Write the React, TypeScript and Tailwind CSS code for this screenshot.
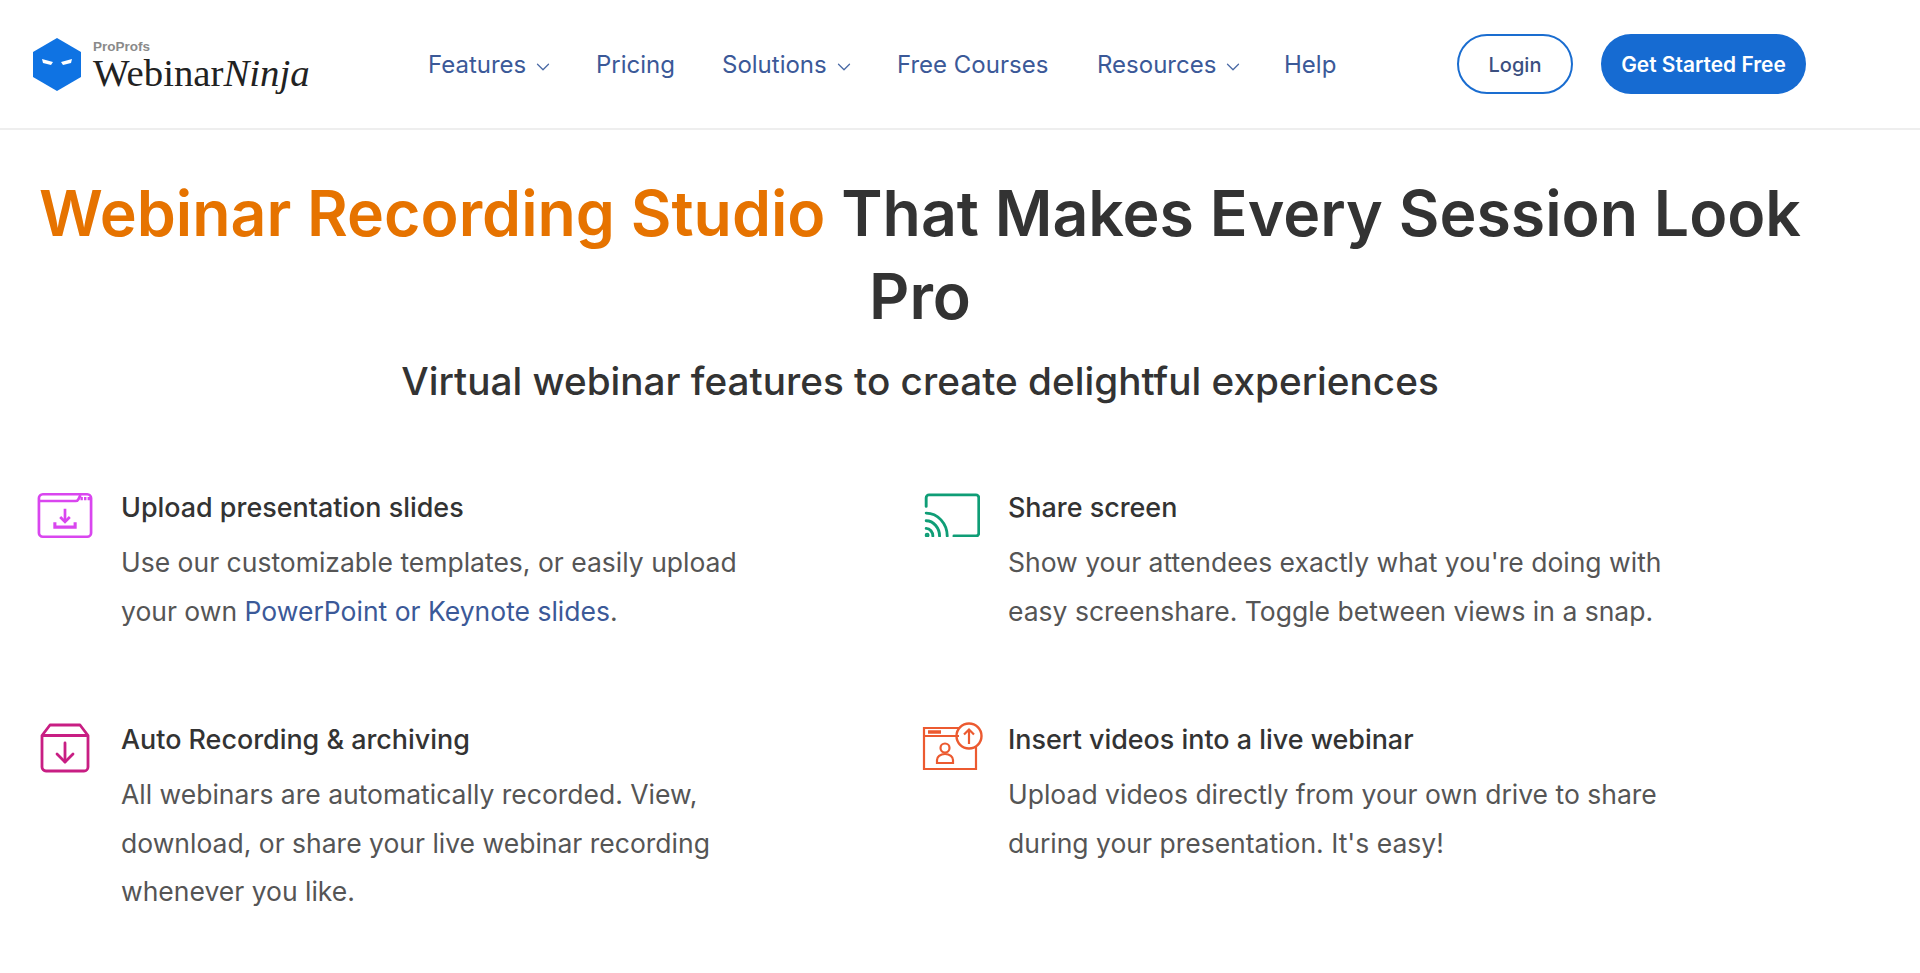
import { ChevronDown } from "lucide-react";

function UploadIcon() {
  return (
    <svg width="56" height="47" viewBox="0 0 58 48" fill="none" stroke="#d946ef" strokeWidth="2.8">
      <rect x="2" y="2" width="54" height="44" rx="4" />
      <path d="M2 9h38q2 0 3-2l2-4" />
      <path d="M45 6.500h10" strokeDasharray="2.500 1.200" strokeWidth="3.500" />
      <path d="M29 17v13" />
      <path d="M24 25.500l5 5 5-5" />
      <path d="M18.500 31v5h21v-5" strokeWidth="3.200" />
    </svg>
  );
}

function ArchiveIcon() {
  return (
    <svg width="52" height="52" viewBox="0 0 52 52" fill="none" stroke="#c81e83" strokeWidth="2.800" strokeLinejoin="round">
      <path d="M3 13.500 11 3h30l8 10.500V45a4 4 0 0 1-4 4H7a4 4 0 0 1-4-4z" />
      <path d="M3 13.500h46" />
      <path d="M26 21v19" strokeLinecap="round" />
      <path d="M18 32l8 8 8-8" strokeLinecap="round" />
    </svg>
  );
}

function CastIcon() {
  return (
    <svg width="56" height="44" viewBox="0 0 58 46" fill="none" stroke="#0f9d76" strokeWidth="3" strokeLinecap="round">
      <path d="M2 14V5a3 3 0 0 1 3-3h49a3 3 0 0 1 3 3v37a3 3 0 0 1-3 3H31" />
      <path d="M2 21c12 0 22 11 22 24" />
      <path d="M2 29c8 0 14 8 14 16" />
      <path d="M2 37c4 0 7 4 7 8" />
      <circle cx="3" cy="44" r="1" fill="#0f9d76" />
    </svg>
  );
}

function VideoIcon() {
  return (
    <svg width="62" height="52" viewBox="0 0 62 52" fill="none" stroke="#ec5a30" strokeWidth="2.200">
      <path d="M37 7H2v41h52V26" />
      <path d="M2 15h35" />
      <path d="M6 11h13" strokeWidth="3.500" />
      <circle cx="47" cy="15" r="12.500" strokeWidth="2.400" />
      <path d="M47 23V8.500M42 13.500 47 8.500l5 5" />
      <circle cx="23" cy="27" r="4.500" />
      <path d="M15 42v-3c0-3 3-6 8-6s8 3 8 6v3z" />
    </svg>
  );
}

function LogoMark() {
  return (
    <svg width="50" height="53" viewBox="0 0 50 53">
      <path d="M25 0 49 14v25L25 53 1 39V14z" fill="#0f73e3" />
      <path d="M10 21l11 3-2 3-8-2zM40 21l-11 3 2 3 8-2z" fill="#fff" />
    </svg>
  );
}

const navItems = [
  { label: "Features", caret: true, w: "w-[168px]" },
  { label: "Pricing", caret: false, w: "w-[126px]" },
  { label: "Solutions", caret: true, w: "w-[175px]" },
  { label: "Free Courses", caret: false, w: "w-[200px]" },
  { label: "Resources", caret: true, w: "w-[187px]" },
  { label: "Help", caret: false, w: "w-[173px]" },
];

function Feature({ icon, title, children, iconClass = "pt-[3px]" }: any) {
  return (
    <div className="flex">
      <div className={`w-[84px] shrink-0 ${iconClass}`}>{icon}</div>
      <div className="w-[720px]">
        <h3 className="text-[26.900px] font-medium leading-[36px] text-[#333]">{title}</h3>
        <p className="mt-[13px] text-[26.500px] leading-[48.500px] text-[#555]">{children}</p>
      </div>
    </div>
  );
}

export default function App() {
  return (
    <div className="min-h-[973px] bg-white font-['Inter','Liberation_Sans',sans-serif]">
      <header className="flex h-[130px] items-start border-b-2 border-[#eeeeee]">
        <div className="ml-[32px] mt-[38px] flex w-[396px] shrink-0">
          <LogoMark />
          <div className="ml-[11px] mt-[1px]">
            <div className="text-[13.500px] font-bold leading-[16px] text-[#8a8a8a] font-['Liberation_Sans',sans-serif]">ProProfs</div>
            <div className="text-[38.800px] leading-[36px] text-[#222] font-['Liberation_Serif',serif]">
              Webinar<span className="italic">Ninja</span>
            </div>
          </div>
        </div>
        <nav className="mt-[46px] flex">
          {navItems.map((n) => (
            <a key={n.label} className={`flex ${n.w} items-center gap-[6px] text-[24px] leading-[38px] text-[#3b5998]`}>
              {n.label}
              {n.caret && <ChevronDown size={22} strokeWidth={1.4} className="mt-[4px] text-[#4a6aa5]" />}
            </a>
          ))}
        </nav>
        <div className="mt-[34px] flex gap-[28px]">
          <button className="h-[60px] w-[116px] rounded-full border-2 border-[#1a6dd0] pt-[2px] text-[20px] font-medium text-[#3b4f80]">
            Login
          </button>
          <button className="h-[60px] w-[205px] rounded-full bg-[#166bd2] pt-[2px] text-[20.900px] font-semibold text-white">
            Get Started Free
          </button>
        </div>
      </header>
      <main className="w-[1840px]">
        <h1 className="mx-auto mt-[42px] w-[1780px] text-center text-[62.600px] font-semibold leading-[83px] text-[#333]">
          <span className="text-[#e67300]">Webinar Recording Studio</span> That Makes Every Session Look Pro
        </h1>
        <h2 className="mt-[18px] text-center text-[38.700px] font-medium leading-[50px] text-[#333]">
          Virtual webinar features to create delightful experiences
        </h2>
        <div className="ml-[37px] mt-[83px] grid grid-cols-[887px_887px] gap-y-[86px]">
          <Feature icon={<UploadIcon />} title="Upload presentation slides">
            Use our customizable templates, or easily upload
            <br />
            your own <span className="text-[#3b5998]">PowerPoint or Keynote slides</span>.
          </Feature>
          <Feature icon={<CastIcon />} iconClass="pt-[4px]" title="Share screen">
            Show your attendees exactly what you're doing with
            <br />
            easy screenshare. Toggle between views in a snap.
          </Feature>
          <Feature icon={<ArchiveIcon />} iconClass="pt-[1px] pl-[2px]" title="Auto Recording & archiving">
            All webinars are automatically recorded. View,
            <br />
            download, or share your live webinar recording
            <br />
            whenever you like.
          </Feature>
          <Feature icon={<VideoIcon />} iconClass="-ml-[2px] mr-[2px]" title="Insert videos into a live webinar">
            Upload videos directly from your own drive to share
            <br />
            during your presentation. It's easy!
          </Feature>
        </div>
      </main>
    </div>
  );
}
